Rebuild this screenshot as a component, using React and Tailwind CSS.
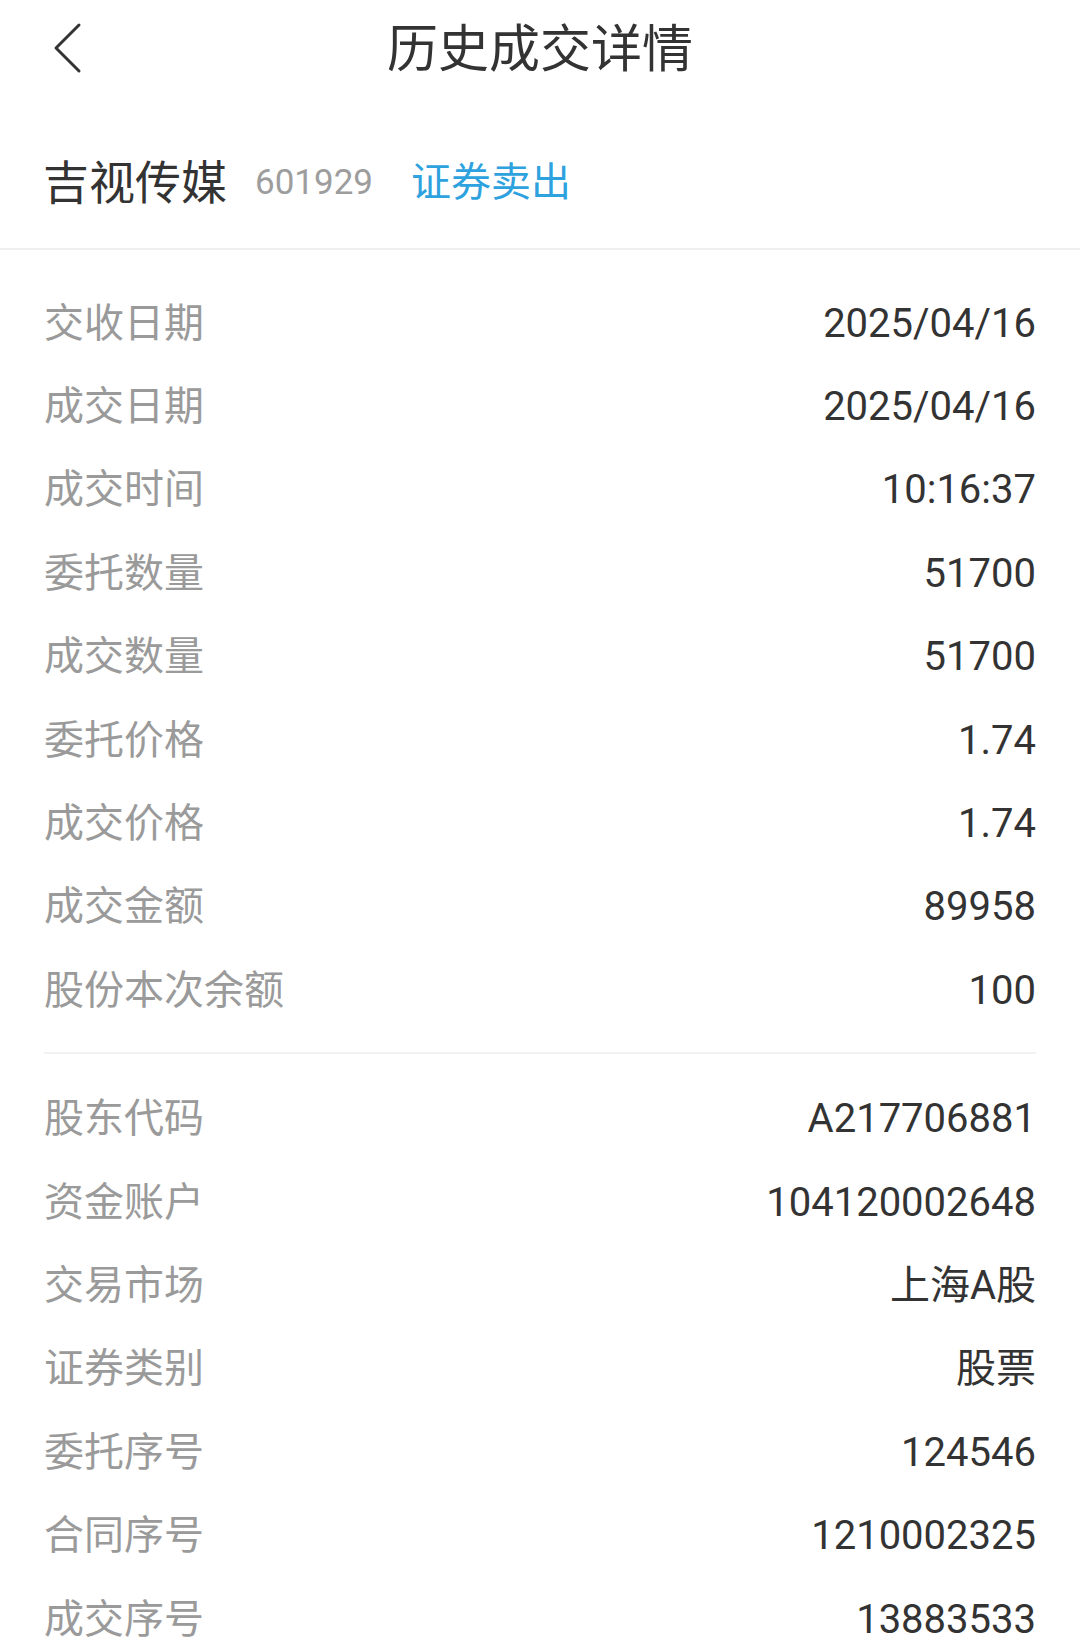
import React from "react";

const tradeRows = [
  ["交收日期", "2025/04/16"],
  ["成交日期", "2025/04/16"],
  ["成交时间", "10:16:37"],
  ["委托数量", "51700"],
  ["成交数量", "51700"],
  ["委托价格", "1.74"],
  ["成交价格", "1.74"],
  ["成交金额", "89958"],
  ["股份本次余额", "100"],
];

const accountRows = [
  ["股东代码", "A217706881"],
  ["资金账户", "104120002648"],
  ["交易市场", "上海A股"],
  ["证券类别", "股票"],
  ["委托序号", "124546"],
  ["合同序号", "1210002325"],
  ["成交序号", "13883533"],
];

const cjk = "font-['Noto_Sans_CJK_SC',sans-serif]";
const num = "font-['Roboto','Noto_Sans_CJK_SC',sans-serif]";

const Row = ({ label, value }) => (
  <div className="h-[83.4px] flex items-center justify-between">
    <span className={`${cjk} text-[40px] leading-none text-[#9a9a9a] -translate-y-[2px]`}>{label}</span>
    <span className={`${num} text-[40px] leading-none text-[#333333] translate-y-[2px]`}>{value}</span>
  </div>
);

export default function App() {
  return (
    <div className="w-[1080px] h-[1646px] bg-white overflow-hidden">
      {/* header */}
      <div className="relative h-[90px] flex items-center justify-center">
        <button className="absolute left-[50px] top-[20px] w-[36px] h-[56px] flex items-center justify-center">
          <svg width="32" height="52" viewBox="0 0 32 52" fill="none">
            <path d="M27 3 L4 26 L27 49" stroke="#333333" strokeWidth="3" strokeLinecap="round" strokeLinejoin="round" />
          </svg>
        </button>
        <h1 className={`${cjk} text-[51px] leading-none text-[#333333] font-normal`}>历史成交详情</h1>
      </div>

      {/* stock */}
      <div className="h-[158px] pt-[20px] px-[43px] flex items-center">
        <span className={`${cjk} text-[46px] leading-none text-[#333333]`}>吉视传媒</span>
        <span className={`${num} text-[35px] leading-none text-[#9d9d9d] ml-[28px] translate-y-[3px]`}>601929</span>
        <span className={`${cjk} text-[40px] leading-none text-[#2ea2de] ml-[38px]`}>证券卖出</span>
      </div>
      <div className="h-[2px] bg-[#f0f0f0]" />

      {/* trade info */}
      <div className="px-[44px] pt-[30px]">
        {tradeRows.map(([l, v]) => (
          <Row key={l} label={l} value={v} />
        ))}
        <div className="h-[2px] bg-[#f1f1f1] mt-[21px] mb-[22px]" />
        {accountRows.map(([l, v]) => (
          <Row key={l} label={l} value={v} />
        ))}
      </div>
    </div>
  );
}
